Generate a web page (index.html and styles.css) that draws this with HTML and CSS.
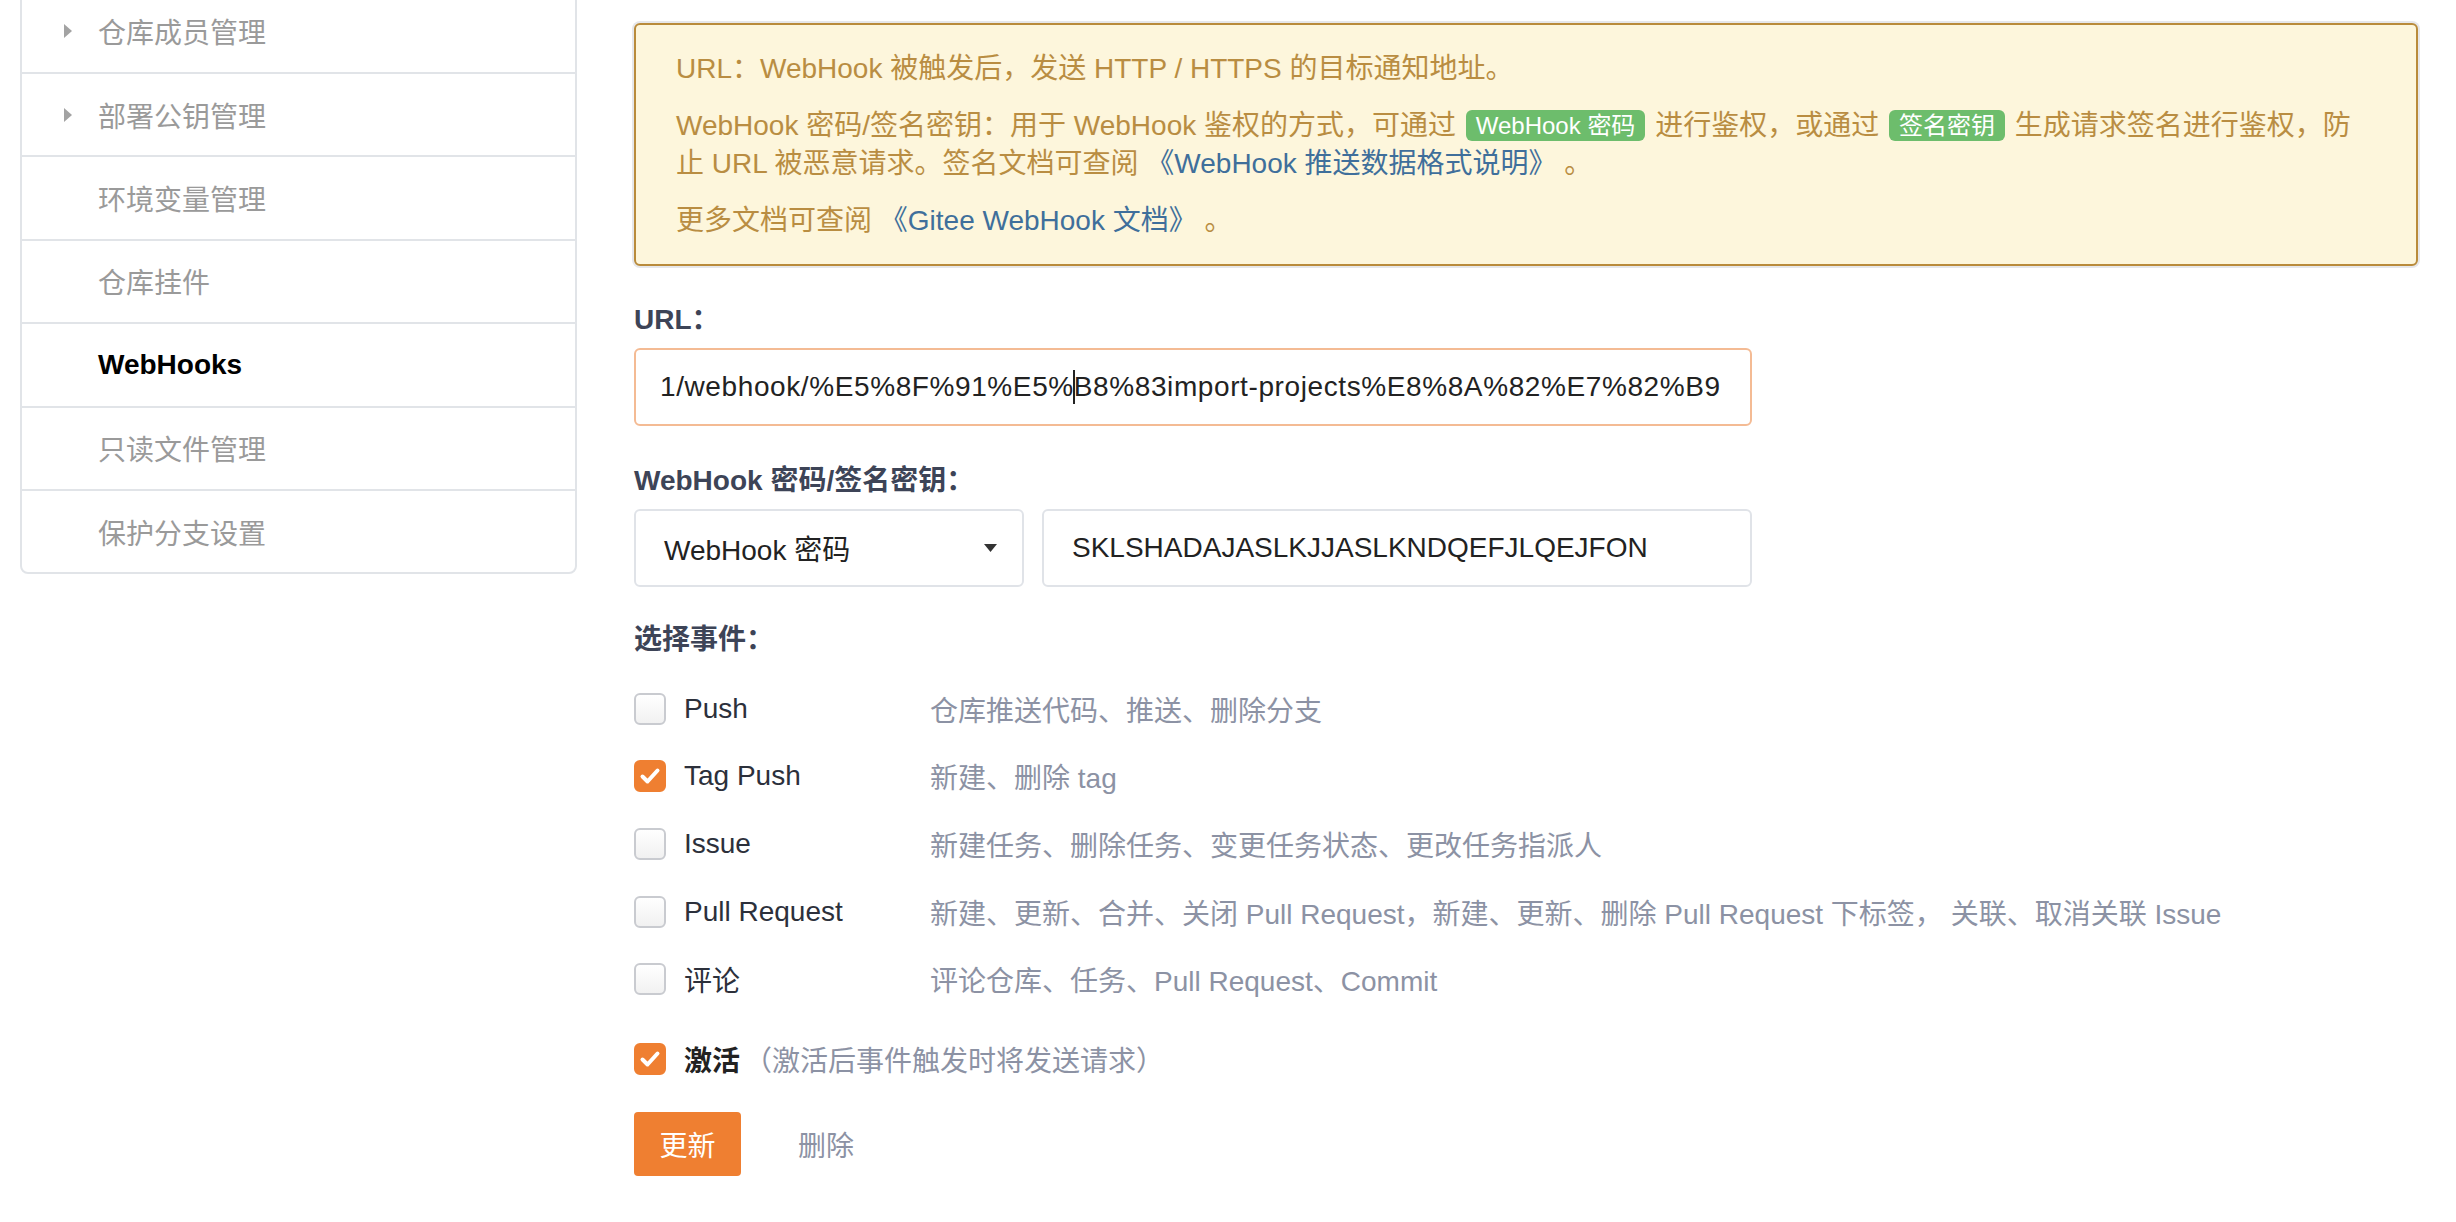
FILE: index.html
```html
<!DOCTYPE html>
<html lang="zh-CN">
<head>
    <meta charset="UTF-8">
    <meta name="viewport" content="width=device-width, initial-scale=1.0">
    <title>WebHooks 设置</title>
    <link rel="stylesheet" href="styles.css">
</head>
<body>
    <div class="page">

        <!-- Settings side menu -->
        <div class="side-menu">
            <div class="menu-item"><span class="menu-arrow"></span><span>仓库成员管理</span></div>
            <div class="menu-item"><span class="menu-arrow"></span><span>部署公钥管理</span></div>
            <div class="menu-item"><span class="menu-slot"></span><span>环境变量管理</span></div>
            <div class="menu-item"><span class="menu-slot"></span><span>仓库挂件</span></div>
            <div class="menu-item active"><span class="menu-slot"></span><span>WebHooks</span></div>
            <div class="menu-item"><span class="menu-slot"></span><span>只读文件管理</span></div>
            <div class="menu-item"><span class="menu-slot"></span><span>保护分支设置</span></div>
        </div>

        <!-- WebHook form -->
        <div class="main">
            <div class="notice">
                <p>URL：WebHook 被触发后，发送 HTTP / HTTPS 的目标通知地址。</p>
                <p>WebHook 密码/签名密钥：用于 WebHook 鉴权的方式，可通过 <span class="tag">WebHook 密码</span> 进行鉴权，或通过 <span class="tag">签名密钥</span> 生成请求签名进行鉴权，防止 URL 被恶意请求。签名文档可查阅 <a href="#" class="doc-link">《WebHook 推送数据格式说明》</a> 。</p>
                <p>更多文档可查阅 <a href="#" class="doc-link">《Gitee WebHook 文档》</a> 。</p>
            </div>

            <div class="field">
                <label class="field-label">URL：</label>
                <div class="text-input focused">1/webhook/%E5%8F%91%E5%<span class="caret"></span>B8%83import-projects%E8%8A%82%E7%82%B9</div>
            </div>

            <div class="field">
                <label class="field-label">WebHook 密码/签名密钥：</label>
                <div class="secret-row">
                    <div class="select-box">
                        <span>WebHook 密码</span>
                        <svg class="select-caret" width="13" height="8" viewBox="0 0 13 8"><polygon points="0,0 13,0 6.5,8" fill="#333"/></svg>
                    </div>
                    <div class="text-input secret">SKLSHADAJASLKJJASLKNDQEFJLQEJFON</div>
                </div>
            </div>

            <div class="field-label events-title">选择事件：</div>
            <div class="events">
                <div class="event-row">
                    <span class="check"></span>
                    <span class="event-name">Push</span>
                    <span class="event-desc">仓库推送代码、推送、删除分支</span>
                </div>
                <div class="event-row">
                    <span class="check checked"><svg width="32" height="32" viewBox="0 0 32 32"><path d="M8.5 16.5 L13.5 21.5 L23.5 10.5" fill="none" stroke="#fff" stroke-width="4" stroke-linecap="round" stroke-linejoin="round"/></svg></span>
                    <span class="event-name">Tag Push</span>
                    <span class="event-desc">新建、删除 tag</span>
                </div>
                <div class="event-row">
                    <span class="check"></span>
                    <span class="event-name">Issue</span>
                    <span class="event-desc">新建任务、删除任务、变更任务状态、更改任务指派人</span>
                </div>
                <div class="event-row">
                    <span class="check"></span>
                    <span class="event-name">Pull Request</span>
                    <span class="event-desc">新建、更新、合并、关闭 Pull Request，新建、更新、删除 Pull Request 下标签， 关联、取消关联 Issue</span>
                </div>
                <div class="event-row">
                    <span class="check"></span>
                    <span class="event-name">评论</span>
                    <span class="event-desc">评论仓库、任务、Pull Request、Commit</span>
                </div>
            </div>

            <div class="activate-row">
                <span class="check checked"><svg width="32" height="32" viewBox="0 0 32 32"><path d="M8.5 16.5 L13.5 21.5 L23.5 10.5" fill="none" stroke="#fff" stroke-width="4" stroke-linecap="round" stroke-linejoin="round"/></svg></span>
                <span class="activate-name">激活</span>
                <span class="event-desc">（激活后事件触发时将发送请求）</span>
            </div>

            <div class="actions">
                <button class="btn-primary">更新</button>
                <a href="#" class="btn-delete">删除</a>
            </div>
        </div>
    </div>
</body>
</html>
```

FILE: styles.css
```css
body, html {
    margin: 0;
    padding: 0;
    background: #fff;
    font-family: "Liberation Sans", "Noto Sans CJK SC", sans-serif;
    font-size: 28px;
    color: #333;
    overflow: hidden;
}

.page {
    display: flex;
    align-items: flex-start;
    padding-left: 20px;
}

/* Side menu */
.side-menu {
    width: 553px;
    margin-top: -13px;
    border: 2px solid #e1e4e8;
    border-radius: 8px;
    background: #fff;
}

.menu-item {
    display: flex;
    align-items: center;
    height: 81.4px;
    padding-left: 42px;
    color: #9a9a9a;
    border-top: 2px solid #e1e4e8;
}

.menu-item:first-child {
    border-top: none;
    height: 83px;
}

.menu-item.active {
    color: #000;
    font-weight: bold;
}

.menu-arrow,
.menu-slot {
    width: 34px;
    flex-shrink: 0;
}

.menu-arrow::before {
    content: "";
    display: block;
    width: 0;
    height: 0;
    border-top: 7px solid transparent;
    border-bottom: 7px solid transparent;
    border-left: 8px solid #a3a3a3;
}

/* Main column */
.main {
    width: 1784px;
    margin-left: 57px;
    padding-top: 23px;
}

.notice {
    background: #fdf6dc;
    border: 2px solid #b98b3b;
    border-radius: 6px;
    box-shadow: 0 0 0 2px #e6e7ea;
    padding: 25px 50px 24px 40px;
    color: #b98d42;
    line-height: 38px;
}

.notice p {
    margin: 0 0 19px;
}

.notice p:last-child {
    margin-bottom: 0;
}

.tag {
    display: inline-block;
    background: #6dbd6c;
    color: #fff;
    font-size: 24px;
    line-height: 31px;
    padding: 0 10px;
    border-radius: 6px;
    margin: 0 2px;
    vertical-align: 1px;
}

.doc-link {
    color: #3f6f9b;
    text-decoration: none;
}

/* Form fields */
.field {
    margin-top: 35px;
}

.field + .field {
    margin-top: 36px;
}

.field-label {
    display: block;
    font-weight: bold;
    color: #3d4457;
    line-height: 38px;
    margin-bottom: 9px;
}

.text-input {
    box-sizing: border-box;
    width: 1118px;
    height: 78px;
    border: 2px solid #e0e3e8;
    border-radius: 6px;
    padding: 0 28px;
    display: flex;
    align-items: center;
    white-space: nowrap;
    overflow: hidden;
    color: #222;
}

.text-input.focused {
    border-color: #f4bb94;
    padding-left: 24px;
    letter-spacing: 0.6px;
}

.caret {
    display: inline-block;
    width: 2px;
    height: 34px;
    background: #222;
    margin: 0 -1px;
}

.secret-row {
    display: flex;
    gap: 18px;
}

.select-box {
    box-sizing: border-box;
    width: 390px;
    height: 78px;
    border: 2px solid #e0e3e8;
    border-radius: 6px;
    padding: 0 25px 0 28px;
    display: flex;
    align-items: center;
    justify-content: space-between;
    color: #222;
}

.text-input.secret {
    width: 710px;
}

/* Events */
.events-title {
    margin-top: 34px;
    margin-bottom: 16px;
}

.event-row,
.activate-row {
    display: flex;
    align-items: center;
    height: 67.6px;
}

.check {
    box-sizing: border-box;
    width: 32px;
    height: 32px;
    flex-shrink: 0;
    border: 2px solid #c9cbd0;
    border-radius: 6px;
    background: linear-gradient(#fff, #f1f1f1);
}

.check.checked {
    border-color: #ef7f31;
    background: #ef7f31;
}

.check svg {
    display: block;
    margin: -2px;
}

.event-name {
    width: 246px;
    margin-left: 18px;
    color: #2c303b;
}

.event-desc {
    color: #8c92a4;
}

.activate-row {
    margin-top: 12px;
}

.activate-name {
    margin-left: 18px;
    margin-right: 4px;
    font-weight: bold;
    color: #222;
}

.actions {
    display: flex;
    align-items: center;
    margin-top: 19px;
}

.btn-primary {
    height: 64px;
    width: 107px;
    border: none;
    border-radius: 4px;
    background: #ef7f31;
    color: #fff;
    font-family: inherit;
    font-size: 28px;
    padding: 0;
}

.btn-delete {
    margin-left: 57px;
    color: #8c92a4;
    text-decoration: none;
}
```
